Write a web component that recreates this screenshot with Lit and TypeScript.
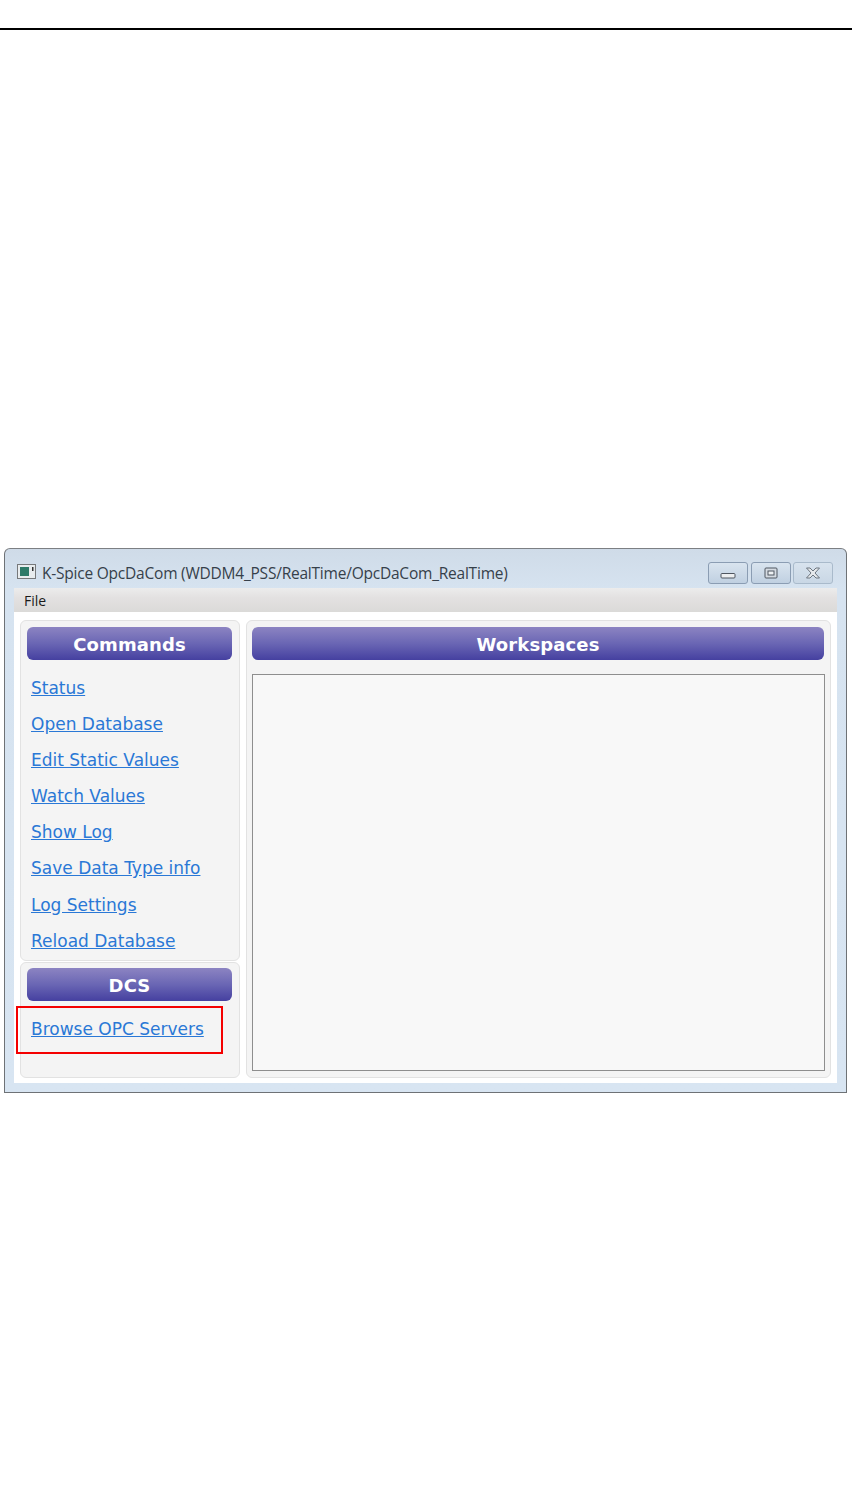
import { LitElement, html, css } from "lit";
import { customElement } from "lit/decorators.js";

const commands = ["Status", "Open Database", "Edit Static Values", "Watch Values", "Show Log", "Save Data Type info", "Log Settings", "Reload Database"];

@customElement("app-root")
export class AppRoot extends LitElement {
  static styles = css`
    :host { display: block; width: 852px; height: 1509px; background: #fff; overflow: hidden; font-family: "DejaVu Sans", sans-serif; }
    .page { padding-top: 28px; }
    .rule { height: 2px; background: #000; }
    .window {
      box-sizing: border-box; margin: 518px 5px 0 4px; width: 843px; height: 545px;
      border: 1px solid #6e7276; border-top-color: #7c7f83; border-radius: 6px 6px 0 0;
      background: linear-gradient(180deg, #cfdbe8 0, #d6e3f0 40px, #d8e5f2 100%);
      display: flex; flex-direction: column; padding: 0 9px 9px 9px;
    }
    .title { height: 39px; flex: none; display: flex; align-items: center; }
    .app-icon { width: 19px; height: 15px; margin: 0 6px 0 3px; flex: none; position: relative; top: 3px; }
    .title-text { font: 15.5px/20px "Open Sans", "Noto Sans", sans-serif; color: #36404a; letter-spacing: -0.22px; white-space: nowrap; padding-top: 9px; }
    .caps { margin-left: auto; display: flex; gap: 3px; margin-right: 4px; margin-top: 8px; }
    .cap { box-sizing: border-box; width: 40px; height: 22px; border: 1px solid #8b9db3; border-radius: 3px; background: linear-gradient(180deg, #d9e4ef, #c0d0e1); display: flex; align-items: center; justify-content: center; }
    .cap.close { margin-left: -1px; border-color: #a9bacb; background: linear-gradient(180deg, #d8e3ee, #c9d7e5); }
    .client { flex: 1; min-height: 0; background: #fff; display: flex; flex-direction: column; }
    .menu { height: 24px; flex: none; background: linear-gradient(180deg, #ececec 0, #e3e1e1 40%, #dbdad8 100%); font: 14px/26px "Open Sans", "Noto Sans", sans-serif; color: #1a1a1a; padding-left: 10px; }
    .body { flex: 1; min-height: 0; display: flex; gap: 6px; padding: 8px 6px 5px 6px; }
    .left { width: 220px; flex: none; display: flex; flex-direction: column; gap: 1px; }
    .panel { box-sizing: border-box; background: #f4f4f4; border: 1px solid #e2e2e2; border-radius: 6px; padding: 6px; }
    .commands { height: 341px; padding-right: 7px; }
    .dcs { flex: 1; position: relative; padding-top: 5px; padding-right: 7px; }
    .right { flex: 1; display: flex; flex-direction: column; padding-left: 5px; }
    .head {
      height: 33px; flex: none; border-radius: 6px; background: linear-gradient(180deg, #8c84c2 0, #6a66b4 50%, #4540a0 100%);
      color: #fff; font-weight: 700; font-size: 18px; line-height: 35px; text-align: center; letter-spacing: 0.12px;
    }
    .links { display: flex; flex-direction: column; padding: 18px 0 0 4px; }
    .link { font-size: 17px; line-height: 20px; height: 36.1px; color: #2a78d6; text-decoration: underline; white-space: nowrap; }
    .workspace { flex: 1; margin: 14px -1px 0 0; background: #f8f8f8; border: 1px solid #8e8e8e; }
    .mark { position: absolute; left: -5px; top: 43px; width: 207px; height: 48px; box-sizing: border-box; border: 2px solid #f40000; }
  `;

  render() {
    return html`<div class="page">
      <div class="rule"></div>
      <div class="window">
        <div class="title">
          <svg class="app-icon" viewBox="0 0 19 15"><rect x=".5" y=".5" width="18" height="14" fill="#e8ecee" stroke="#77797b"/><rect x="3" y="3" width="9" height="9" fill="#2d7a68"/><rect x="15" y="3" width="1.500" height="4" fill="#333"/></svg>
          <span class="title-text">K-Spice OpcDaCom (WDDM4_PSS/RealTime/OpcDaCom_RealTime)</span>
          <div class="caps">
            <div class="cap"><svg width="16" height="12" viewBox="0 0 16 12"><rect x="1" y="6.500" width="14" height="4.500" rx="1" fill="#eceef0" stroke="#4f5660"/></svg></div>
            <div class="cap"><svg width="14" height="12" viewBox="0 0 14 12"><rect x="1" y="1" width="12" height="10" rx="1" fill="#d5dbe2" stroke="#4f5660"/><rect x="4" y="4" width="6" height="4" fill="#eef1f3" stroke="#4f5660"/></svg></div>
            <div class="cap close"><svg width="16" height="12" viewBox="0 0 16 12"><path d="M1.500 1h3.500l3 3 3-3h3.500l-4.500 5 4.500 5h-3.500l-3-3-3 3H1.500l4.500-5z" fill="#e6e9ec" stroke="#6d7680"/></svg></div>
          </div>
        </div>
        <div class="client">
          <div class="menu">File</div>
          <div class="body">
            <div class="left">
              <div class="panel commands">
                <div class="head">Commands</div>
                <div class="links">${commands.map((c) => html`<span class="link">${c}</span>`)}</div>
              </div>
              <div class="panel dcs">
                <div class="head">DCS</div>
                <div class="links"><span class="link">Browse OPC Servers</span></div>
                <div class="mark"></div>
              </div>
            </div>
            <div class="panel right">
              <div class="head">Workspaces</div>
              <div class="workspace"></div>
            </div>
          </div>
        </div>
      </div>
    </div>`;
  }
}
